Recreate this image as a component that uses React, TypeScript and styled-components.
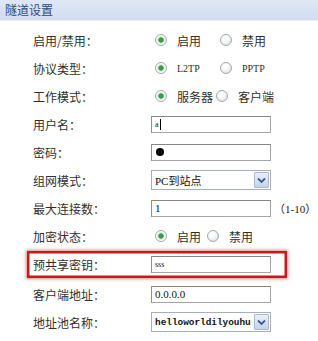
import React from 'react';
import styled, { createGlobalStyle, css } from 'styled-components';

const GlobalStyle = createGlobalStyle`
  html, body {
    margin: 0;
    padding: 0;
    background: #fff;
  }
  body {
    font-family: "Noto Sans CJK SC", "Noto Sans", sans-serif;
    font-size: 12px;
    color: #333;
  }
`;

const Panel = styled.div`
  width: 318px;
  height: 341px;
  overflow: hidden;
  background: #fff;
`;

const Header = styled.div`
  height: 20px;
  line-height: 20px;
  padding-left: 5px;
  background: linear-gradient(#dfe8f6, #d0dcf0);
  border-bottom: 1px solid #edf2f9;
  color: #2d4b7d;
  font-size: 12px;
`;

const Form = styled.div`
  display: flex;
  flex-direction: column;
  padding: 5px 0 0 27px;
`;

const Row = styled.div<{ $highlight?: boolean }>`
  display: grid;
  grid-template-columns: 118px 1fr;
  align-items: center;
  width: 260px;
  height: 28px;
  box-sizing: border-box;
  padding-left: 6px;

  ${({ $highlight }) =>
    $highlight &&
    css`
      height: 27px;
      margin: 1px 0 2px;
      box-shadow: inset 0 0 0 2.5px #d0151b, 0 0 3px 1px rgba(170, 20, 20, 0.5);
    `}
`;

const Label = styled.span`
  font-size: 12px;
  color: #2f2f2f;
  white-space: nowrap;
`;

const Controls = styled.div`
  display: flex;
  align-items: center;
`;

const Option = styled.div<{ $w?: number }>`
  display: flex;
  align-items: center;
  width: ${({ $w }) => ($w ? `${$w}px` : 'auto')};
  margin-left: 4px;
  &:not(:first-child) {
    margin-left: 0;
  }
`;

const Radio = styled.span<{ $checked?: boolean }>`
  width: 12px;
  height: 12px;
  box-sizing: border-box;
  border-radius: 50%;
  border: 1px solid #a2a8ae;
  background: ${({ $checked }) =>
    $checked
      ? 'radial-gradient(circle, #3f9a4c 0 2.3px, #cfe8cf 3px, #fdfdfd 4.5px)'
      : 'radial-gradient(circle at 40% 35%, #ffffff 0 2px, #e6e8ea 6px)'};
  margin-right: 10px;
  flex: none;
`;

const OptionText = styled.span<{ $latin?: boolean }>`
  font-size: ${({ $latin }) => ($latin ? '10px' : '12px')};
  font-family: ${({ $latin }) =>
    $latin ? '"Liberation Serif", serif' : '"Noto Sans CJK SC", sans-serif'};
  color: #2f2f2f;
  white-space: nowrap;
`;

const TextBox = styled.div<{ $small?: boolean }>`
  width: 120px;
  height: 17px;
  box-sizing: border-box;
  border: 1px solid #a6a6a6;
  border-top-color: #868686;
  border-left-color: #8f8f8f;
  background: #fff;
  display: flex;
  align-items: center;
  padding-left: 3px;
  font-family: "Liberation Serif", serif;
  font-size: ${({ $small }) => ($small ? '8px' : '11px')};
  color: #111;
  white-space: nowrap;
`;

const Caret = styled.span`
  display: inline-block;
  width: 1px;
  height: 11px;
  background: #000;
  margin-left: 1px;
`;

const Dot = styled.span`
  width: 8px;
  height: 8px;
  border-radius: 50%;
  background: #000;
  margin-left: 1px;
`;

const SelectBox = styled.div`
  width: 120px;
  height: 20px;
  box-sizing: border-box;
  border: 1px solid #a7b0b8;
  background: #fff;
  display: flex;
  align-items: center;
`;

const SelectText = styled.span<{ $mono?: boolean }>`
  flex: 1;
  padding-left: 3px;
  font-family: ${({ $mono }) =>
    $mono ? '"Liberation Mono", monospace' : '"Liberation Serif", "Noto Sans CJK SC", serif'};
  font-weight: ${({ $mono }) => ($mono ? 700 : 400)};
  font-size: ${({ $mono }) => ($mono ? '9.4px' : '11px')};
  color: #111;
  white-space: nowrap;
  overflow: hidden;
`;

const ArrowBtn = styled.span`
  width: 15px;
  height: 16px;
  box-sizing: border-box;
  margin-right: 1px;
  border: 1px solid #a9b9d3;
  border-radius: 1px;
  background: linear-gradient(#e9f0fa, #c4d4ec);
  display: flex;
  align-items: center;
  justify-content: center;
`;

const Hint = styled.span`
  margin-left: 3px;
  font-family: "Noto Sans CJK SC", sans-serif;
  font-size: 11px;
  color: #222;
  white-space: nowrap;
`;

const HintNum = styled.span`
  font-family: "Liberation Serif", serif;
  font-size: 11px;
`;

const Chevron = () => (
  <svg width="9" height="7" viewBox="0 0 9 7">
    <path d="M1 1.5 L4.5 5 L8 1.5" fill="none" stroke="#3a5b94" strokeWidth="1.8" />
  </svg>
);

type Opt = { text: string; checked?: boolean; latin?: boolean; w?: number };

const RadioGroup: React.FC<{ options: Opt[] }> = ({ options }) => (
  <Controls>
    {options.map((o) => (
      <Option key={o.text} $w={o.w}>
        <Radio $checked={o.checked} />
        <OptionText $latin={o.latin}>{o.text}</OptionText>
      </Option>
    ))}
  </Controls>
);

export default function App() {
  return (
    <Panel>
      <GlobalStyle />
      <Header>隧道设置</Header>
      <Form>
        <Row>
          <Label>启用/禁用：</Label>
          <RadioGroup
            options={[
              { text: '启用', checked: true, w: 65 },
              { text: '禁用' },
            ]}
          />
        </Row>
        <Row>
          <Label>协议类型：</Label>
          <RadioGroup
            options={[
              { text: 'L2TP', checked: true, latin: true, w: 65 },
              { text: 'PPTP', latin: true },
            ]}
          />
        </Row>
        <Row>
          <Label>工作模式：</Label>
          <RadioGroup
            options={[
              { text: '服务器', checked: true, w: 61 },
              { text: '客户端' },
            ]}
          />
        </Row>
        <Row>
          <Label>用户名：</Label>
          <Controls>
            <TextBox $small>
              a<Caret />
            </TextBox>
          </Controls>
        </Row>
        <Row>
          <Label>密码：</Label>
          <Controls>
            <TextBox>
              <Dot />
            </TextBox>
          </Controls>
        </Row>
        <Row>
          <Label>组网模式：</Label>
          <Controls>
            <SelectBox>
              <SelectText>PC到站点</SelectText>
              <ArrowBtn>
                <Chevron />
              </ArrowBtn>
            </SelectBox>
          </Controls>
        </Row>
        <Row>
          <Label>最大连接数：</Label>
          <Controls>
            <TextBox>1</TextBox>
            <Hint>
              （<HintNum>1-10</HintNum>）
            </Hint>
          </Controls>
        </Row>
        <Row>
          <Label>加密状态：</Label>
          <RadioGroup
            options={[
              { text: '启用', checked: true, w: 52 },
              { text: '禁用' },
            ]}
          />
        </Row>
        <Row $highlight>
          <Label>预共享密钥：</Label>
          <Controls>
            <TextBox $small>sss</TextBox>
          </Controls>
        </Row>
        <Row>
          <Label>客户端地址：</Label>
          <Controls>
            <TextBox>0.0.0.0</TextBox>
          </Controls>
        </Row>
        <Row>
          <Label>地址池名称：</Label>
          <Controls>
            <SelectBox>
              <SelectText $mono>helloworldilyouhu</SelectText>
              <ArrowBtn>
                <Chevron />
              </ArrowBtn>
            </SelectBox>
          </Controls>
        </Row>
      </Form>
    </Panel>
  );
}
